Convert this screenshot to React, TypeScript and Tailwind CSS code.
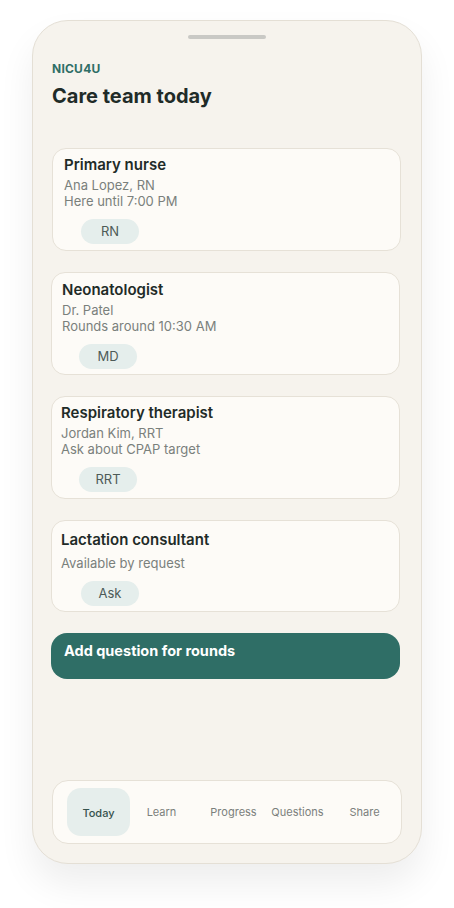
const CARDS = [
  {
    role: "Primary nurse",
    lines: ["Ana Lopez, RN", "Here until 7:00 PM"],
    tag: "RN",
    box: "ml-px -mr-px h-[103px] pl-[11px] pt-[7px]",
    pill: "ml-[17px]",
  },
  {
    role: "Neonatologist",
    lines: ["Dr. Patel", "Rounds around 10:30 AM"],
    tag: "MD",
    box: "h-[103px] pl-[10px] pt-[8px]",
    pill: "ml-[17px]",
  },
  {
    role: "Respiratory therapist",
    lines: ["Jordan Kim, RRT", "Ask about CPAP target"],
    tag: "RRT",
    box: "h-[103px] pl-[9px] pt-[7px]",
    pill: "ml-[18px]",
  },
  {
    role: "Lactation consultant",
    lines: ["Available by request"],
    tag: "Ask",
    box: "h-[92px] pl-[9px] pt-[10px]",
    pill: "ml-[20px]",
  },
];

// widths are equal, spacing in the nav is a little uneven
const TABS = [
  { label: "Today", gap: "" },
  { label: "Learn", gap: "ml-0" },
  { label: "Progress", gap: "ml-[9px]" },
  { label: "Questions", gap: "ml-px" },
  { label: "Share", gap: "ml-[4px]" },
];

function TeamCard({ card }: { card: (typeof CARDS)[number] }) {
  const single = card.lines.length === 1;
  return (
    <div className={`rounded-[14px] border border-[#e6e1d7] bg-[#fdfbf7] ${card.box}`}>
      <div className="text-[15px] font-semibold leading-[18px] text-[#1f2b28]">{card.role}</div>
      <div className={`${single ? "mt-[6px]" : "mt-[3px]"} text-[13px] leading-4 text-[#7a807c]`}>
        {card.lines.map((l) => (
          <div key={l}>{l}</div>
        ))}
      </div>
      <div
        className={`mt-[10px] flex h-[25px] w-[58px] items-center justify-center rounded-full bg-[#e5eeec] text-[13px] text-[#4d5b57] ${card.pill}`}
      >
        {card.tag}
      </div>
    </div>
  );
}

export default function App() {
  return (
    <div className="min-h-[908px] bg-white pt-5" style={{ fontFamily: "Inter, 'Noto Sans', sans-serif" }}>
      <div className="mx-auto flex h-[844px] w-[390px] flex-col rounded-[36px] border border-[#e4dfd5] bg-[#f6f3ed] shadow-[0_20px_36px_rgba(0,0,0,0.07)]">
        <div className="mx-auto mt-[14px] h-1 w-[78px] rounded-full bg-[#c9c9c5]" />

        <div className="mt-[22px] pl-[19px]">
          <div className="text-[12px] font-bold leading-4 tracking-[0.02em] text-[#2f6e66]">NICU4U</div>
          <h1 className="mt-[5px] text-[20px] font-bold leading-7 text-[#1f2b28]">Care team today</h1>
        </div>

        <div className="mt-[38px] flex flex-col gap-[21px] pl-[18px] pr-[21px]">
          {CARDS.map((c) => (
            <TeamCard key={c.role} card={c} />
          ))}
          <button
            type="button"
            className="rounded-2xl bg-[#2f6e66] pb-[18px] pl-[13px] pt-[8px] text-left text-[14.5px] font-bold leading-5 text-white"
          >
            Add question for rounds
          </button>
        </div>

        <div className="mt-auto mb-[19px] ml-[19px] mr-[19px] flex rounded-2xl border border-[#e6e1d7] bg-[#fdfbf7] py-[7px] pl-[14px]">
          {TABS.map((t, i) => (
            <div
              key={t.label}
              className={`flex h-12 w-[63px] items-center justify-center whitespace-nowrap rounded-[14px] text-[11px] ${t.gap} ${
                i === 0 ? "bg-[#e6eeec] pt-[3px] font-medium text-[#36524c]" : "text-[#7b807c]"
              }`}
            >
              {t.label}
            </div>
          ))}
        </div>
      </div>
    </div>
  );
}
